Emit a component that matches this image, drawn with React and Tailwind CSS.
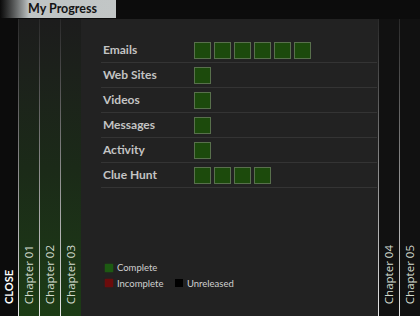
import React from "react";

// My Progress panel: chapter tabs down both sides, stats rows in the middle.

const rows = [
  { label: "Emails", done: 6 },
  { label: "Web Sites", done: 1 },
  { label: "Videos", done: 1 },
  { label: "Messages", done: 1 },
  { label: "Activity", done: 1 },
  { label: "Clue Hunt", done: 4 },
];

function SideTab({ label, green }) {
  return (
    <div className="flex h-full">
      <div className="w-px h-full bg-gradient-to-b from-[#2a2a2a] via-[#888] to-[#e8e8e8]" />
      <div
        className={
          green
            ? "w-[20px] h-full flex flex-col justify-end items-center pb-[12px] bg-gradient-to-b from-[#1c1c1c] via-[#1b2a18] to-[#1c3c15]"
            : "w-[20px] h-full flex flex-col justify-end items-center pb-[12px] bg-[#111111]"
        }
      >
        <span
          className="[writing-mode:vertical-rl] rotate-180 text-[11.5px] text-[#d4dcd0]"
          style={{ fontFamily: "'Open Sans', sans-serif" }}
        >
          {label}
        </span>
      </div>
    </div>
  );
}

export default function App() {
  return (
    <div
      className="w-[420px] h-[316px] flex flex-col bg-[#1a1a1a] overflow-hidden"
      style={{ fontFamily: "Lato, 'Open Sans', sans-serif" }}
    >
      {/* top bar */}
      <div className="h-[19px] flex bg-[#0c0c0c]">
        <div className="w-[116px] h-[18px] flex items-center pl-[28px] bg-gradient-to-r from-[#0a0a0a] via-[#bfc4c4] via-25% to-[#c2c6c6]">
          <span className="text-[12.5px] font-bold text-[#141414] leading-none">My Progress</span>
        </div>
      </div>

      <div className="flex-1 flex">
        {/* left tabs */}
        <div className="w-[18px] h-full flex flex-col justify-end items-center pb-[12px] bg-[#0c0c0c]">
          <span className="[writing-mode:vertical-rl] rotate-180 text-[11px] font-bold text-white">CLOSE</span>
        </div>
        <SideTab label="Chapter 01" green />
        <SideTab label="Chapter 02" green />
        <SideTab label="Chapter 03" green />

        {/* main panel */}
        <div className="w-[298px] h-full bg-[#222222] pt-[19px] pl-[20px] pr-[1px] flex flex-col">
          {rows.map((row) => (
            <div key={row.label} className="h-[25px] flex items-center border-b border-[#343434]">
              <div className="w-[93px] pl-[2px] text-[12px] font-bold text-[#c4c4c4]">{row.label}</div>
              <div className="flex gap-[3px]">
                {Array.from({ length: row.done }).map((_, i) => (
                  <div key={i} className="w-[17px] h-[17px] bg-[#1c4a0c] border border-[#58704c]" />
                ))}
              </div>
            </div>
          ))}

          <div className="mt-auto mb-[28px] flex flex-col gap-[6px] pl-[4px] text-[9.5px] leading-none text-[#d0d0d0]">
            <div className="flex items-center gap-[4px]">
              <div className="w-[8px] h-[8px] bg-[#1d5a12] shadow-[0_0_2px_#1d5a12]" />
              <span>Complete</span>
            </div>
            <div className="flex items-center gap-[4px]">
              <div className="w-[8px] h-[8px] bg-[#6b0c0c] shadow-[0_0_2px_#6b0c0c]" />
              <span className="w-[54px]">Incomplete</span>
              <div className="w-[8px] h-[8px] bg-black" />
              <span>Unreleased</span>
            </div>
          </div>
        </div>

        {/* right tabs */}
        <SideTab label="Chapter 04" />
        <SideTab label="Chapter 05" />
      </div>
    </div>
  );
}
